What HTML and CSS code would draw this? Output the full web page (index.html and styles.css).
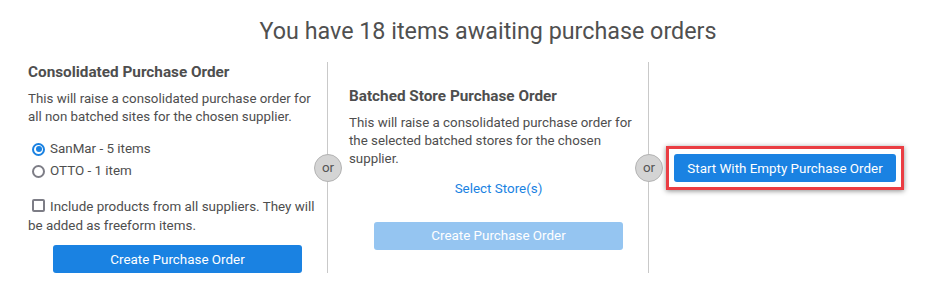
FILE: index.html
```html
<!DOCTYPE html>
<html>
<head>
<meta charset="utf-8">
<link rel="stylesheet" href="styles.css">
</head>
<body>
<div class="page">
  <h1 class="title">You have 18 items awaiting purchase orders</h1>
  <div class="cols">
    <div class="col col-first">
      <h2 class="heading">Consolidated Purchase Order</h2>
      <p class="desc">This will raise a consolidated purchase order for all non batched sites for the chosen supplier.</p>
      <div class="radios">
        <label class="opt"><span class="radio checked"></span>SanMar - 5 items</label>
        <label class="opt"><span class="radio"></span>OTTO - 1 item</label>
      </div>
      <p class="check-line"><span class="checkbox"></span>Include products from all suppliers. They will be added as freeform items.</p>
      <div class="btn-row"><button class="btn">Create Purchase Order</button></div>
    </div>
    <div class="col col-mid">
      <span class="or">or</span>
      <h2 class="heading">Batched Store Purchase Order</h2>
      <p class="desc">This will raise a consolidated purchase order for the selected batched stores for the chosen supplier.</p>
      <div class="link-row"><a class="link">Select Store(s)</a></div>
      <div class="btn-row btn-row-mid"><button class="btn btn-disabled">Create Purchase Order</button></div>
    </div>
    <div class="col col-last">
      <span class="or">or</span>
      <div class="highlight"><button class="btn btn-wide">Start With Empty Purchase Order</button></div>
    </div>
  </div>
</div>
</body>
</html>
```
FILE: styles.css
```css
* { box-sizing: border-box; }
html, body { margin: 0; padding: 0; background: #fff; }
body {
  font-family: Roboto, "Liberation Sans", sans-serif;
  color: #4e4e4e;
  width: 925px;
  height: 300px;
  overflow: hidden;
}
.page {
  margin-left: 7px;
  width: 962px;
}
.title {
  margin: 16px 0 16px;
  font-size: 23.3px;
  line-height: 30px;
  font-weight: 400;
  text-align: center;
  color: #505050;
}
.cols {
  display: flex;
  align-items: stretch;
  height: 211px;
}
.col {
  position: relative;
  width: 321px;
  padding-left: 21px;
  display: flex;
  flex-direction: column;
  justify-content: center;
}
.col-first { width: 320px; justify-content: flex-start; }
.col-mid, .col-last { border-left: 1px solid #c9c9c9; }
.col-last { padding-left: 17px; align-items: flex-start; }
.heading {
  margin: 0;
  font-size: 15.3px;
  line-height: 20px;
  font-weight: 700;
  color: #4e4e4e;
}
.desc {
  margin: 8px 0 0;
  font-size: 13.3px;
  line-height: 18px;
}
.radios {
  margin-top: 12px;
  display: flex;
  flex-direction: column;
}
.opt {
  display: flex;
  align-items: center;
  font-size: 13.4px;
  line-height: 22px;
}
.radio {
  width: 13px;
  height: 13px;
  border-radius: 50%;
  border: 2px solid #7d7d86;
  margin: 0 5px 0 4px;
  position: relative;
}
.radio.checked { border-color: #1a82e2; }
.radio.checked::after {
  content: "";
  position: absolute;
  left: 1.5px;
  top: 1.5px;
  width: 6px;
  height: 6px;
  border-radius: 50%;
  background: #1a82e2;
}
.check-line {
  margin: 15px 0 0;
  font-size: 13.4px;
  line-height: 19px;
}
.checkbox {
  display: inline-block;
  width: 13px;
  height: 13px;
  border: 2px solid #7d7d86;
  border-radius: 2px;
  margin: 0 5px 0 4px;
  vertical-align: -1px;
}
.btn-row {
  margin-top: 10px;
  display: flex;
  justify-content: center;
}
.btn-row-mid { margin-top: 24px; }
.btn {
  width: 249px;
  height: 28px;
  border: 0;
  border-radius: 3px;
  background: #1a82e2;
  color: #fff;
  font-family: Roboto, "Liberation Sans", sans-serif;
  font-size: 13.4px;
  padding: 0;
}
.btn-disabled { background: #95c5f1; }
.btn-wide { width: 222px; }
.link-row {
  margin-top: 12px;
  text-align: center;
  font-size: 13.4px;
  line-height: 18px;
}
.link { color: #1a82e2; }
.highlight {
  border: 3px solid #ea3d43;
  padding: 5px 5px;
  box-shadow: 0 1px 5px rgba(0,0,0,0.45);
  margin-top: 1px;
}
.highlight .btn { display: block; }
.or {
  position: absolute;
  left: -14px;
  top: 92px;
  width: 28px;
  height: 28px;
  border-radius: 50%;
  background: #d4d4d4;
  border: 1px solid #b3b3b3;
  font-size: 13.4px;
  line-height: 25px;
  text-align: center;
  color: #555;
}
```
